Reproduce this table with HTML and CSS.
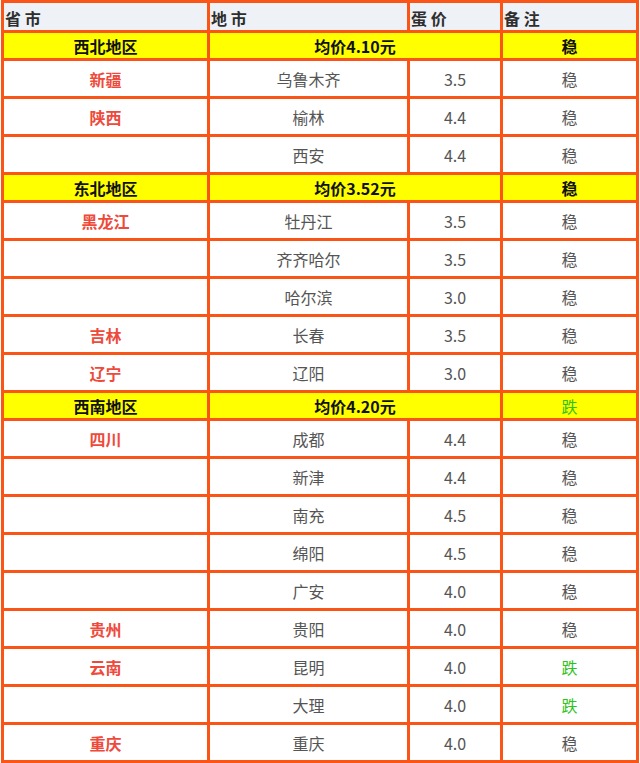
FILE: index.html
```html
<!DOCTYPE html>
<html lang="zh">
<head>
<meta charset="utf-8">
<title>蛋价</title>
<link rel="stylesheet" href="styles.css">
</head>
<body>
<table class="price">
  <tr class="head">
    <td class="c1">省 市</td>
    <td class="c2">地 市</td>
    <td class="c3">蛋 价</td>
    <td class="c4">备 注</td>
  </tr>
  <tr class="region">
    <td>西北地区</td>
    <td colspan="2">均价4.10元</td>
    <td>稳</td>
  </tr>
  <tr class="row"><td class="prov">新疆</td><td>乌鲁木齐</td><td>3.5</td><td>稳</td></tr>
  <tr class="row"><td class="prov">陕西</td><td>榆林</td><td>4.4</td><td>稳</td></tr>
  <tr class="row"><td class="prov"></td><td>西安</td><td>4.4</td><td>稳</td></tr>
  <tr class="region">
    <td>东北地区</td>
    <td colspan="2">均价3.52元</td>
    <td>稳</td>
  </tr>
  <tr class="row"><td class="prov">黑龙江</td><td>牡丹江</td><td>3.5</td><td>稳</td></tr>
  <tr class="row"><td class="prov"></td><td>齐齐哈尔</td><td>3.5</td><td>稳</td></tr>
  <tr class="row"><td class="prov"></td><td>哈尔滨</td><td>3.0</td><td>稳</td></tr>
  <tr class="row"><td class="prov">吉林</td><td>长春</td><td>3.5</td><td>稳</td></tr>
  <tr class="row"><td class="prov">辽宁</td><td>辽阳</td><td>3.0</td><td>稳</td></tr>
  <tr class="region">
    <td>西南地区</td>
    <td colspan="2">均价4.20元</td>
    <td class="down">跌</td>
  </tr>
  <tr class="row"><td class="prov">四川</td><td>成都</td><td>4.4</td><td>稳</td></tr>
  <tr class="row"><td class="prov"></td><td>新津</td><td>4.4</td><td>稳</td></tr>
  <tr class="row"><td class="prov"></td><td>南充</td><td>4.5</td><td>稳</td></tr>
  <tr class="row"><td class="prov"></td><td>绵阳</td><td>4.5</td><td>稳</td></tr>
  <tr class="row"><td class="prov"></td><td>广安</td><td>4.0</td><td>稳</td></tr>
  <tr class="row"><td class="prov">贵州</td><td>贵阳</td><td>4.0</td><td>稳</td></tr>
  <tr class="row"><td class="prov">云南</td><td>昆明</td><td>4.0</td><td class="down">跌</td></tr>
  <tr class="row"><td class="prov"></td><td>大理</td><td>4.0</td><td class="down">跌</td></tr>
  <tr class="row"><td class="prov">重庆</td><td>重庆</td><td>4.0</td><td>稳</td></tr>
</table>
</body>
</html>
```

FILE: styles.css
```css
html, body {
  margin: 0;
  padding: 0;
  background: #ffffff;
}

.price {
  margin-left: 1px;
  width: 638px;
  table-layout: fixed;
  border-collapse: separate;
  border-spacing: 0;
  border-left: 3px solid #fa5416;
  border-top: 3px solid #fa5416;
  font-family: "Noto Sans CJK SC", "Microsoft YaHei", sans-serif;
  font-size: 16px;
}

.price td {
  box-sizing: border-box;
  border-right: 3px solid #fa5416;
  border-bottom: 3px solid #fa5416;
  padding: 0;
  text-align: center;
  vertical-align: middle;
  line-height: 20px;
}

.c1 { width: 206px; }
.c2 { width: 200px; }
.c3 { width: 93px; }
.c4 { width: 136px; }

.head td {
  height: 30px;
  background: #eef1f6;
  color: #2e2e2e;
  font-weight: bold;
  text-align: left;
  padding-left: 1px;
  padding-top: 2px;
}

.region td {
  height: 28px;
  background: #ffff00;
  color: #111111;
  font-weight: bold;
}

.region td.down {
  font-weight: normal;
  color: #2fc21c;
}

.row td {
  height: 38px;
  color: #555555;
}

.row td.prov {
  color: #ee4a3c;
  font-weight: bold;
}

.row td.down {
  color: #2fc21c;
}
```
